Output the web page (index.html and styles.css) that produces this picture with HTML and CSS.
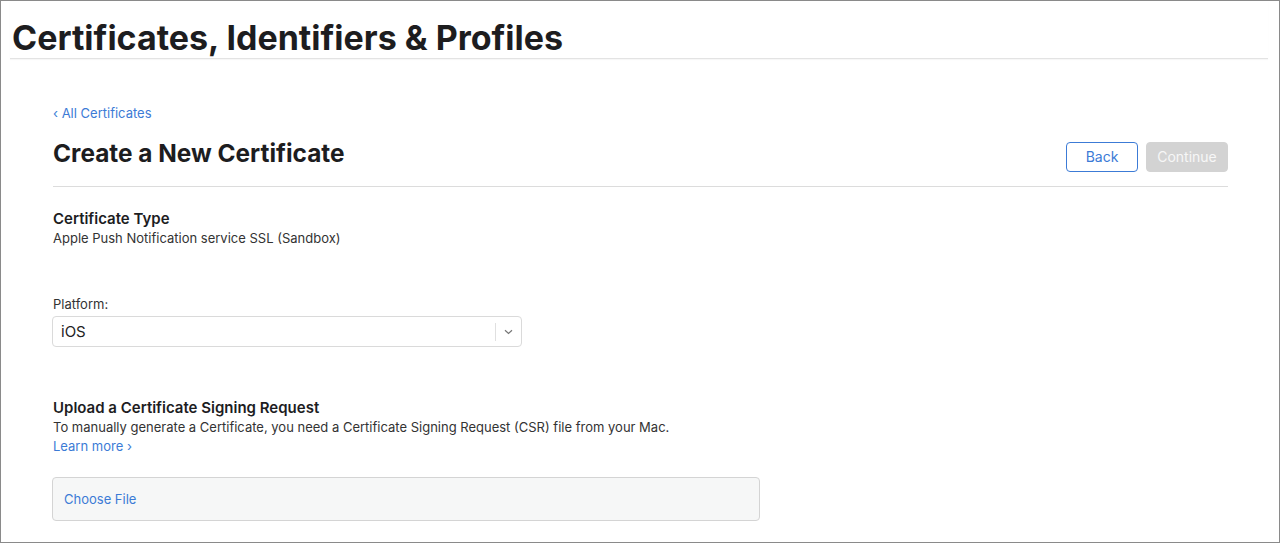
FILE: index.html
```html
<!DOCTYPE html>
<html>
<head>
<meta charset="utf-8">
<link rel="stylesheet" href="styles.css">
</head>
<body>
<div class="frame">
  <header class="site-header">
    <h1 class="site-title">Certificates, Identifiers &amp; Profiles</h1>
  </header>
  <main class="content">
    <a class="back-link" href="#">‹ All Certificates</a>
    <div class="page-head">
      <h2 class="page-title">Create a New Certificate</h2>
      <div class="actions">
        <button class="btn btn-back">Back</button>
        <button class="btn btn-continue" disabled>Continue</button>
      </div>
    </div>
    <section class="block cert-type">
      <h3 class="block-title">Certificate Type</h3>
      <p class="block-text">Apple Push Notification service SSL (Sandbox)</p>
    </section>
    <section class="block platform">
      <label class="field-label">Platform:</label>
      <div class="select">
        <span class="select-value">iOS</span>
        <span class="select-sep"></span>
        <svg class="select-chevron" width="9" height="6" viewBox="0 0 9 6"><path d="M1 1.2 L4.5 4.5 L8 1.2" fill="none" stroke="#777" stroke-width="1.2"/></svg>
      </div>
    </section>
    <section class="block upload">
      <h3 class="block-title">Upload a Certificate Signing Request</h3>
      <p class="block-text">To manually generate a Certificate, you need a Certificate Signing Request (CSR) file from your Mac.</p>
      <a class="learn-more" href="#">Learn more ›</a>
      <div class="file-box"><span class="choose-file">Choose File</span></div>
    </section>
  </main>
</div>
</body>
</html>
```
FILE: styles.css
```css
* { box-sizing: border-box; }
html, body { margin: 0; padding: 0; background: #fff; }
body { font-family: Inter, "Noto Sans", "Liberation Sans", sans-serif; color: #1d1d1f; }
.frame {
  width: 1280px; height: 543px; border: 1px solid #8a8a8a; overflow: hidden;
}
.site-header {
  margin: 0 11px 0 9px; height: 58px; border-bottom: 1px solid #e3e3e3;
  box-shadow: 0 1px 1px rgba(0,0,0,0.03);
  padding-left: 2px;
}
.site-title {
  margin: 0; font-size: 34px; font-weight: 700; line-height: 1; padding-top: 20px;
}
.content { padding: 0 51px 0 52px; }
.back-link {
  display: block; margin-top: 46px; font-size: 13px; color: #3c7bd6; text-decoration: none; line-height: 16px;
}
.page-head {
  display: flex; justify-content: space-between; align-items: flex-start;
  border-bottom: 1px solid #dcdcdc; height: 54px; margin-top: 12px;
}
.page-title { margin: 0; font-size: 24.4px; font-weight: 700; line-height: 30px; margin-top: 5px; }
.actions { display: flex; gap: 8px; margin-top: 9px; }
.btn {
  font-family: inherit; font-size: 14px; height: 30px; line-height: 28px; border-radius: 4px; padding: 0 20px;
}
.btn-back { background: #fff; border: 1px solid #3c7bd6; color: #3c7bd6; width: 72px; padding: 0 0 2px; }
.btn-continue { background: #d3d3d3; border: 1px solid #d3d3d3; color: #f7f7f7; width: 82px; padding: 0 0 2px; }
.block-title { margin: 0; font-size: 15px; font-weight: 600; line-height: 20px; }
.block-text { margin: 0; font-size: 13px; line-height: 18px; color: #333; }
.cert-type { margin-top: 22px; }
.platform { margin-top: 48px; }
.field-label { display: block; font-size: 13px; line-height: 18px; color: #333; }
.select {
  margin: 3px 0 0 -1px; width: 470px; height: 31px; border: 1px solid #dadada; border-radius: 4px;
  display: flex; align-items: center; padding-left: 8px; padding-right: 6px;
}
.select-value { flex: 1; font-size: 15px; color: #222; }
.select-sep { width: 1px; height: 18px; background: #e0e0e0; margin-right: 8px; }
.select-chevron { margin-right: 2px; }
.upload { margin-top: 51px; }
.learn-more { display: block; font-size: 13px; line-height: 20px; color: #3c7bd6; text-decoration: none; }
.file-box {
  margin: 21px 0 0 -1px; width: 708px; height: 44px; background: #f6f7f7; border: 1px solid #d4d4d4; border-radius: 4px;
  display: flex; align-items: center; padding-left: 11px;
}
.choose-file { font-size: 13px; color: #3c7bd6; }
```
